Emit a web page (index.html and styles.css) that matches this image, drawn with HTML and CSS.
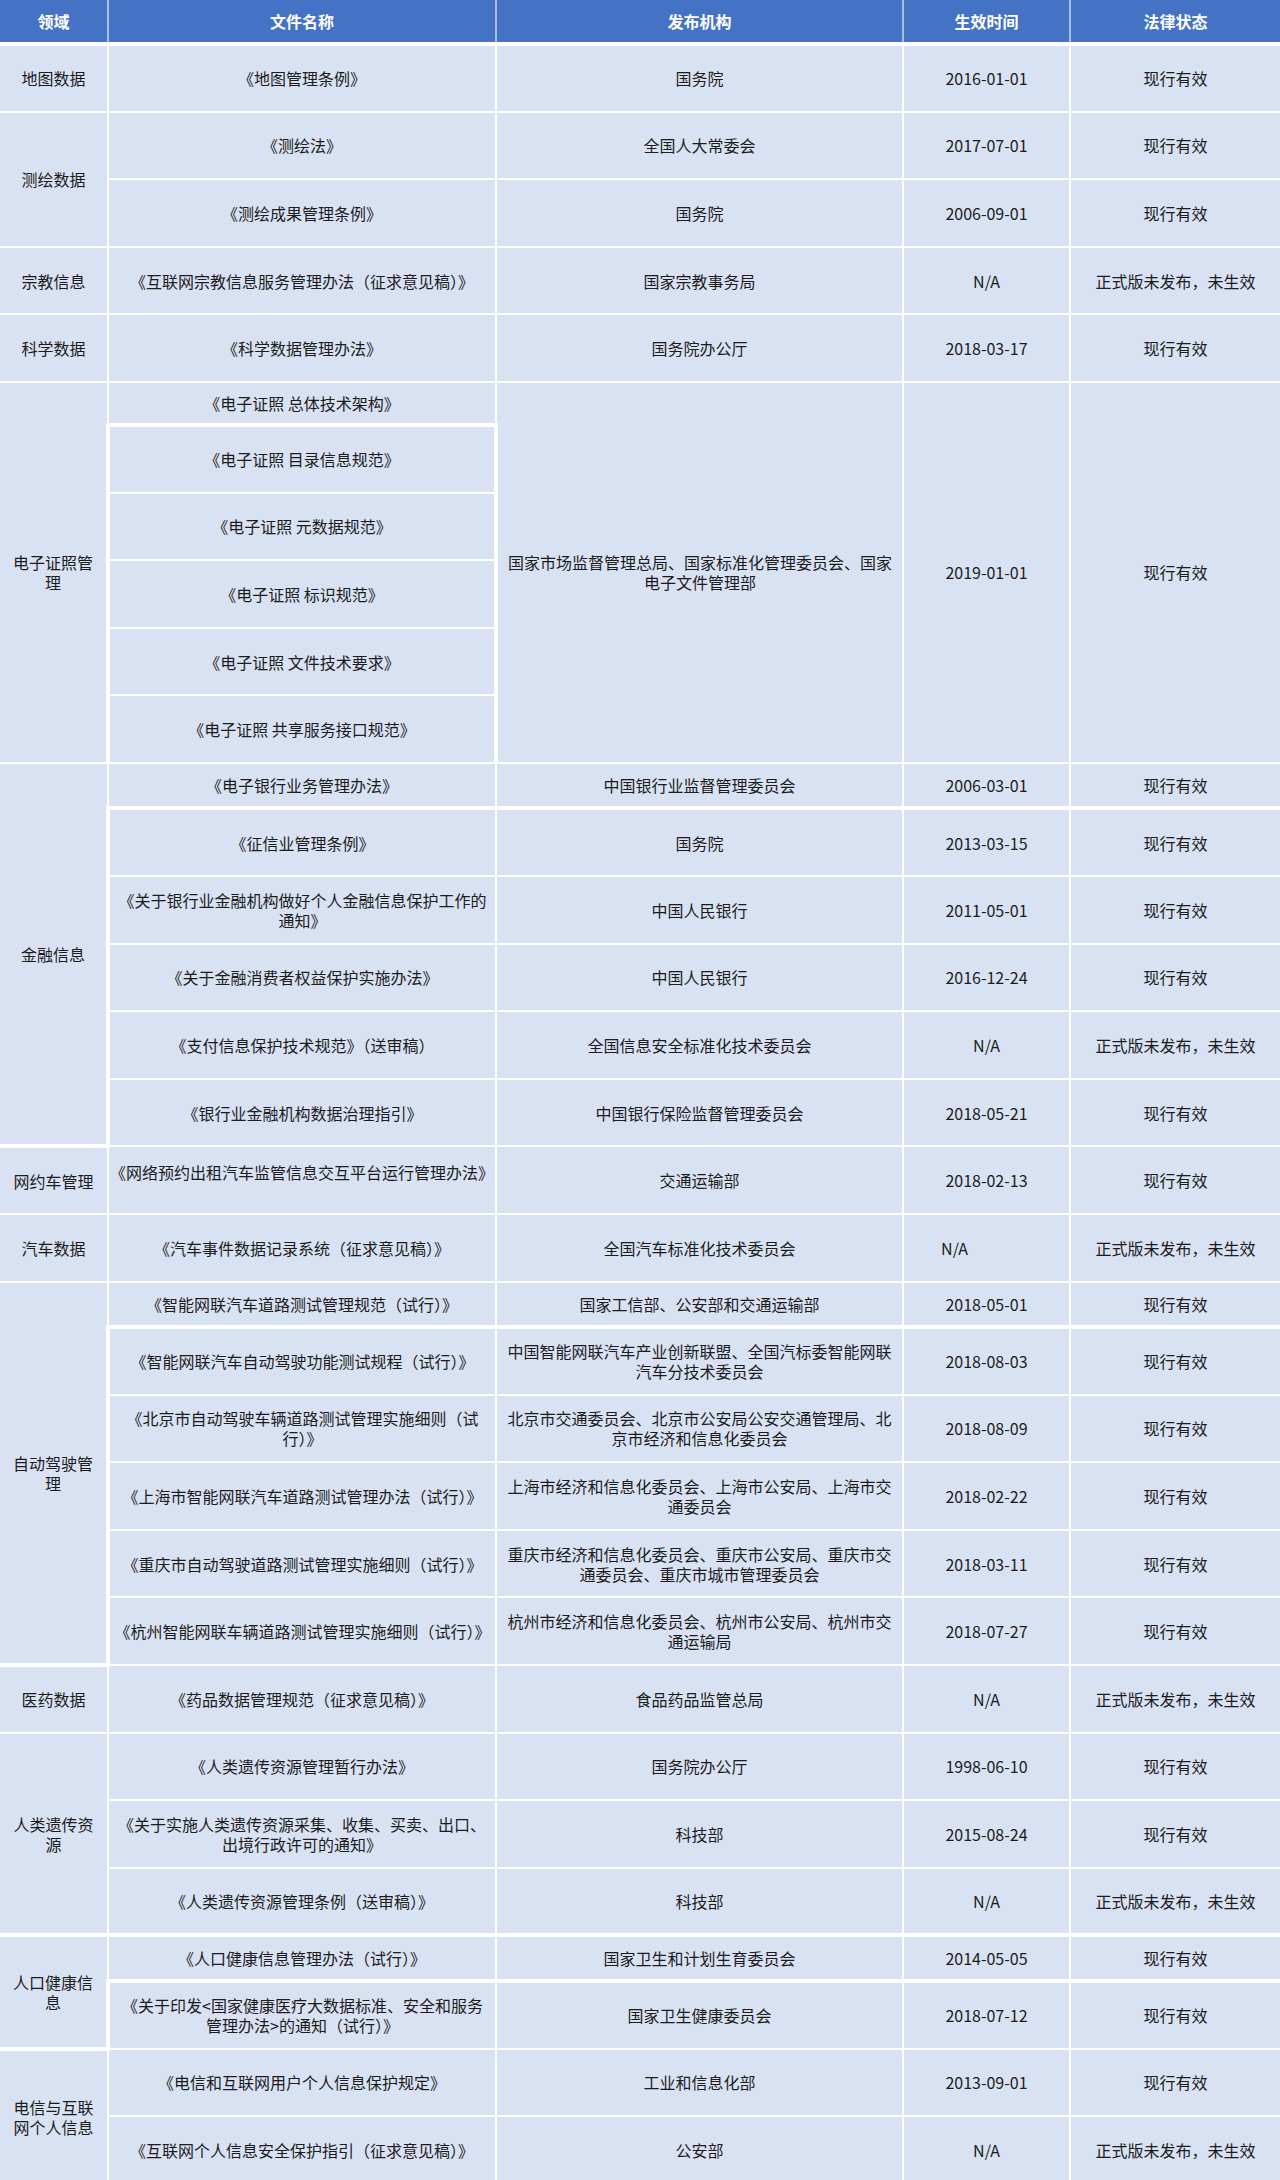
FILE: index.html
```html
<!DOCTYPE html>
<html lang="zh-CN">
<head>
<meta charset="utf-8">
<title>数据相关法规</title>
<link rel="stylesheet" href="styles.css">
</head>
<body>
<table class="law-table">
  <colgroup>
    <col class="c-field">
    <col class="c-name">
    <col class="c-org">
    <col class="c-date">
    <col class="c-status">
  </colgroup>
  <thead>
    <tr class="head-row">
      <th>领域</th>
      <th>文件名称</th>
      <th>发布机构</th>
      <th>生效时间</th>
      <th>法律状态</th>
    </tr>
  </thead>
  <tbody>
    <tr class="r">
      <td>地图数据</td>
      <td>《地图管理条例》</td>
      <td>国务院</td>
      <td>2016-01-01</td>
      <td>现行有效</td>
    </tr>
    <tr class="r">
      <td rowspan="2">测绘数据</td>
      <td>《测绘法》</td>
      <td>全国人大常委会</td>
      <td>2017-07-01</td>
      <td>现行有效</td>
    </tr>
    <tr class="r">
      <td>《测绘成果管理条例》</td>
      <td>国务院</td>
      <td>2006-09-01</td>
      <td>现行有效</td>
    </tr>
    <tr class="r">
      <td>宗教信息</td>
      <td>《互联网宗教信息服务管理办法（征求意见稿）》</td>
      <td>国家宗教事务局</td>
      <td>N/A</td>
      <td>正式版未发布，未生效</td>
    </tr>
    <tr class="r">
      <td>科学数据</td>
      <td>《科学数据管理办法》</td>
      <td>国务院办公厅</td>
      <td>2018-03-17</td>
      <td>现行有效</td>
    </tr>

    <tr class="s s43">
      <td rowspan="6">电子证照管<br>理</td>
      <td>《电子证照 总体技术架构》</td>
      <td rowspan="6">国家市场监督管理总局、国家标准化管理委员会、国家<br>电子文件管理部</td>
      <td rowspan="6">2019-01-01</td>
      <td rowspan="6">现行有效</td>
    </tr>
    <tr class="r">
      <td class="tt tl tr">《电子证照 目录信息规范》</td>
    </tr>
    <tr class="r">
      <td class="tl tr">《电子证照 元数据规范》</td>
    </tr>
    <tr class="r">
      <td class="tl tr">《电子证照 标识规范》</td>
    </tr>
    <tr class="r">
      <td class="tl tr">《电子证照 文件技术要求》</td>
    </tr>
    <tr class="r">
      <td class="tl tr">《电子证照 共享服务接口规范》</td>
    </tr>

    <tr class="s">
      <td rowspan="6" class="tb">金融信息</td>
      <td>《电子银行业务管理办法》</td>
      <td>中国银行业监督管理委员会</td>
      <td>2006-03-01</td>
      <td>现行有效</td>
    </tr>
    <tr class="r">
      <td class="tt tl">《征信业管理条例》</td>
      <td class="tt">国务院</td>
      <td class="tt">2013-03-15</td>
      <td class="tt">现行有效</td>
    </tr>
    <tr class="r">
      <td class="tl">《关于银行业金融机构做好个人金融信息保护工作的<br>通知》</td>
      <td>中国人民银行</td>
      <td>2011-05-01</td>
      <td>现行有效</td>
    </tr>
    <tr class="r">
      <td class="tl">《关于金融消费者权益保护实施办法》</td>
      <td>中国人民银行</td>
      <td>2016-12-24</td>
      <td>现行有效</td>
    </tr>
    <tr class="r">
      <td class="tl">《支付信息保护技术规范》（送审稿）</td>
      <td>全国信息安全标准化技术委员会</td>
      <td>N/A</td>
      <td>正式版未发布，未生效</td>
    </tr>
    <tr class="r">
      <td class="tl">《银行业金融机构数据治理指引》</td>
      <td>中国银行保险监督管理委员会</td>
      <td>2018-05-21</td>
      <td>现行有效</td>
    </tr>

    <tr class="r">
      <td>网约车管理</td>
      <td class="raised">《网络预约出租汽车监管信息交互平台运行管理办法》</td>
      <td>交通运输部</td>
      <td>2018-02-13</td>
      <td>现行有效</td>
    </tr>
    <tr class="r">
      <td>汽车数据</td>
      <td>《汽车事件数据记录系统（征求意见稿）》</td>
      <td>全国汽车标准化技术委员会</td>
      <td class="shift-left">N/A</td>
      <td>正式版未发布，未生效</td>
    </tr>

    <tr class="s">
      <td rowspan="6" class="tb">自动驾驶管<br>理</td>
      <td>《智能网联汽车道路测试管理规范（试行）》</td>
      <td>国家工信部、公安部和交通运输部</td>
      <td>2018-05-01</td>
      <td>现行有效</td>
    </tr>
    <tr class="r">
      <td class="tt tl">《智能网联汽车自动驾驶功能测试规程（试行）》</td>
      <td class="tt">中国智能网联汽车产业创新联盟、全国汽标委智能网联<br>汽车分技术委员会</td>
      <td class="tt">2018-08-03</td>
      <td class="tt">现行有效</td>
    </tr>
    <tr class="r">
      <td class="tl">《北京市自动驾驶车辆道路测试管理实施细则（试<br>行）》</td>
      <td>北京市交通委员会、北京市公安局公安交通管理局、北<br>京市经济和信息化委员会</td>
      <td>2018-08-09</td>
      <td>现行有效</td>
    </tr>
    <tr class="r">
      <td class="tl">《上海市智能网联汽车道路测试管理办法（试行）》</td>
      <td>上海市经济和信息化委员会、上海市公安局、上海市交<br>通委员会</td>
      <td>2018-02-22</td>
      <td>现行有效</td>
    </tr>
    <tr class="r">
      <td class="tl">《重庆市自动驾驶道路测试管理实施细则（试行）》</td>
      <td>重庆市经济和信息化委员会、重庆市公安局、重庆市交<br>通委员会、重庆市城市管理委员会</td>
      <td>2018-03-11</td>
      <td>现行有效</td>
    </tr>
    <tr class="r">
      <td class="tl">《杭州智能网联车辆道路测试管理实施细则（试行）》</td>
      <td>杭州市经济和信息化委员会、杭州市公安局、杭州市交<br>通运输局</td>
      <td>2018-07-27</td>
      <td>现行有效</td>
    </tr>

    <tr class="r">
      <td>医药数据</td>
      <td>《药品数据管理规范（征求意见稿）》</td>
      <td>食品药品监管总局</td>
      <td>N/A</td>
      <td>正式版未发布，未生效</td>
    </tr>

    <tr class="r">
      <td rowspan="3" class="tb">人类遗传资<br>源</td>
      <td>《人类遗传资源管理暂行办法》</td>
      <td>国务院办公厅</td>
      <td>1998-06-10</td>
      <td>现行有效</td>
    </tr>
    <tr class="r">
      <td>《关于实施人类遗传资源采集、收集、买卖、出口、<br>出境行政许可的通知》</td>
      <td>科技部</td>
      <td>2015-08-24</td>
      <td>现行有效</td>
    </tr>
    <tr class="r">
      <td class="tb">《人类遗传资源管理条例（送审稿）》</td>
      <td class="tb">科技部</td>
      <td class="tb">N/A</td>
      <td class="tb">正式版未发布，未生效</td>
    </tr>

    <tr class="s">
      <td rowspan="2" class="tb">人口健康信<br>息</td>
      <td class="tb">《人口健康信息管理办法（试行）》</td>
      <td class="tb">国家卫生和计划生育委员会</td>
      <td class="tb">2014-05-05</td>
      <td class="tb">现行有效</td>
    </tr>
    <tr class="r">
      <td class="tl">《关于印发&lt;国家健康医疗大数据标准、安全和服务<br>管理办法&gt;的通知（试行）》</td>
      <td>国家卫生健康委员会</td>
      <td>2018-07-12</td>
      <td>现行有效</td>
    </tr>

    <tr class="r">
      <td rowspan="2">电信与互联<br>网个人信息</td>
      <td>《电信和互联网用户个人信息保护规定》</td>
      <td>工业和信息化部</td>
      <td>2013-09-01</td>
      <td>现行有效</td>
    </tr>
    <tr class="r">
      <td>《互联网个人信息安全保护指引（征求意见稿）》</td>
      <td>公安部</td>
      <td>N/A</td>
      <td>正式版未发布，未生效</td>
    </tr>
  </tbody>
</table>
</body>
</html>
```

FILE: styles.css
```css
html, body {
  margin: 0;
  padding: 0;
  background: #d9e2f3;
}

.law-table {
  width: 1280px;
  table-layout: fixed;
  border-collapse: collapse;
  border-style: hidden;
  font-family: "Noto Sans CJK SC", "Microsoft YaHei", sans-serif;
  font-size: 16px;
  line-height: 20px;
  color: #1c1c1c;
}

.c-field { width: 108px; }
.c-name { width: 388px; }
.c-org { width: 407px; }
.c-date { width: 167px; }
.c-status { width: 210px; }

.law-table th,
.law-table td {
  padding: 0;
  text-align: center;
  vertical-align: middle;
  white-space: nowrap;
  overflow: visible;
  border: 2px solid #ffffff;
}

.law-table td {
  background: #d9e2f3;
}

.head-row {
  height: 44px;
}

.law-table th {
  background: #4472c4;
  color: #ffffff;
  font-weight: 700;
  border-color: #a9bde6;
  border-bottom: 4px solid #ffffff;
}

tr.r { height: 67.6px; }
tr.s { height: 45.5px; }
tr.s43 { height: 43px; }

/* thicker white rules left by the source slide */
.law-table td.tt { border-top: 4px solid #ffffff; }
.law-table td.tb { border-bottom: 4px solid #ffffff; }
.law-table td.tl { border-left: 4px solid #ffffff; }
.law-table td.tr { border-right: 4px solid #ffffff; }

.law-table td.raised { padding-bottom: 16px; }
.law-table td.shift-left { padding-right: 64px; }
```
